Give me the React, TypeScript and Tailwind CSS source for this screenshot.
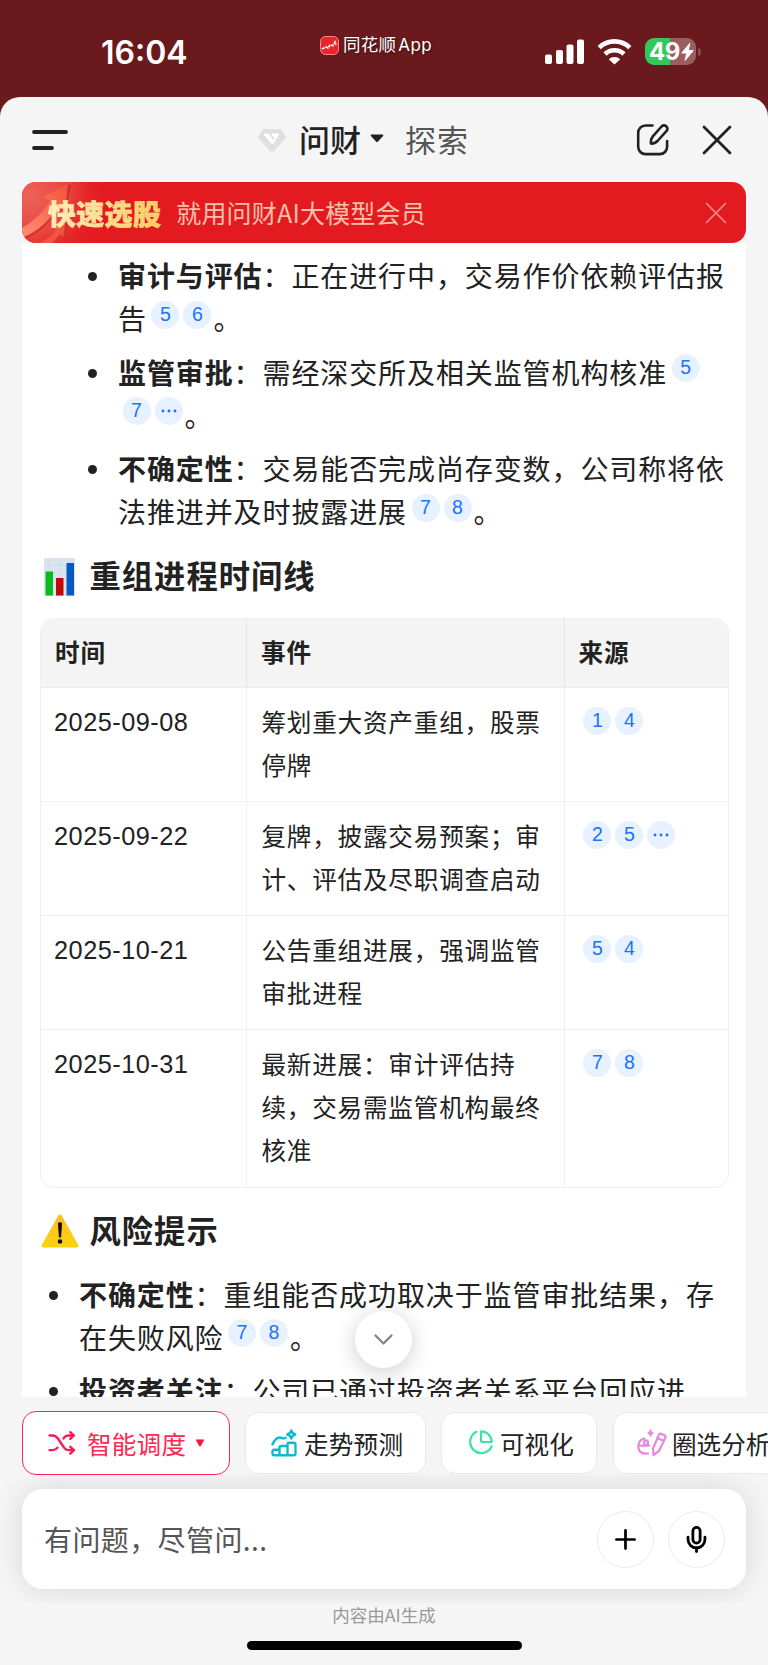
import React from 'react';
import { Mic, Plus } from 'lucide-react';

type Line = { bold?: string; text?: string; refs?: string[]; end?: string };

const progressItems: Line[][] = [
  [
    { bold: '审计与评估', text: '：正在进行中，交易作价依赖评估报' },
    { text: '告', refs: ['5', '6'], end: '。' },
  ],
  [
    { bold: '监管审批', text: '：需经深交所及相关监管机构核准', refs: ['5'] },
    { refs: ['7', '···'], end: '。' },
  ],
  [
    { bold: '不确定性', text: '：交易能否完成尚存变数，公司称将依' },
    { text: '法推进并及时披露进展', refs: ['7', '8'], end: '。' },
  ],
];

const riskItems: Line[][] = [
  [
    { bold: '不确定性', text: '：重组能否成功取决于监管审批结果，存' },
    { text: '在失败风险', refs: ['7', '8'], end: '。' },
  ],
  [{ bold: '投资者关注', text: '：公司已通过投资者关系平台回应进' }],
];

const rows = [
  { date: '2025-09-08', event: ['筹划重大资产重组，股票', '停牌'], refs: ['1', '4'] },
  { date: '2025-09-22', event: ['复牌，披露交易预案；审', '计、评估及尽职调查启动'], refs: ['2', '5', '···'] },
  { date: '2025-10-21', event: ['公告重组进展，强调监管', '审批进程'], refs: ['5', '4'] },
  { date: '2025-10-31', event: ['最新进展：审计评估持', '续，交易需监管机构最终', '核准'], refs: ['7', '8'] },
];

const Refs = ({ items }: { items: string[] }) => (
  <span className="flex gap-1 ml-[4.500px] mr-[2px]">
    {items.map((item) => (
      <span
        key={item}
        className="flex items-center justify-center w-7 h-7 rounded-full bg-[#e7f1ff] text-[#1a72ff] text-[19.500px] leading-none tracking-normal font-['Liberation_Sans',sans-serif]"
      >
        {item === '···' ? (
          <svg width="16" height="4" viewBox="0 0 16 4" fill="currentColor">
            <circle cx="2" cy="2" r="1.4" />
            <circle cx="8" cy="2" r="1.4" />
            <circle cx="14" cy="2" r="1.4" />
          </svg>
        ) : (
          item
        )}
      </span>
    ))}
  </span>
);

const BulletList = ({ items }: { items: Line[][] }) => (
  <ul className="flex flex-col gap-[10.6px] text-[28px] tracking-[0.9px]">
    {items.map((lines, i) => (
      <li key={i} className="flex">
        <span className="w-[9px] h-[9px] mt-[18px] mr-[21px] shrink-0 rounded-full bg-[#222]" />
        <div>
          {lines.map((line, j) => (
            <div key={j} className="flex items-center h-[43px] leading-[43px]">
              {line.bold && <strong className="font-bold">{line.bold}</strong>}
              {line.text && <span>{line.text}</span>}
              {line.refs && (
                <span className="-mt-2">
                  <Refs items={line.refs} />
                </span>
              )}
              {line.end && <span>{line.end}</span>}
            </div>
          ))}
        </div>
      </li>
    ))}
  </ul>
);

const StatusBar = () => (
  <div className="flex h-[97px] shrink-0 text-white">
    <div className="w-[320px] pl-[101px] pt-[33px] font-['Inter',sans-serif] font-semibold text-[32px] leading-[40px]">
      16:04
    </div>
    <div className="flex items-center gap-1 h-5 mt-[35px] w-[182px] text-[17.500px]">
      <svg width="19" height="19" viewBox="0 0 19 19">
        <rect x="0.5" y="0.5" width="18" height="18" rx="5" fill="#e8262b" stroke="#f58a8a" />
        <path d="M2 13l4-2 2 1 2-3 3 .5 2-3.5 1 3" fill="none" stroke="#fff" strokeWidth="1.6" strokeDasharray="3 .8" />
      </svg>
      <span className="whitespace-nowrap tracking-[0.2px] [text-shadow:1px_1px_2px_rgba(0,0,0,0.5)]">
        同花顺 <span className="-ml-0.5 font-['Inter',sans-serif] text-[17px] tracking-[0.5px]">App</span>
      </span>
    </div>
    <div className="flex gap-[13px] pt-[38px] ml-[43px]">
      <svg width="39" height="27" viewBox="0 0 39 27" fill="currentColor">
        <rect x="0" y="16.5" width="7" height="9.5" rx="2" />
        <rect x="11" y="12" width="7" height="14" rx="2" />
        <rect x="21.5" y="6.5" width="7" height="19.5" rx="2" />
        <rect x="32" y="1.5" width="7" height="24.5" rx="2" />
      </svg>
      <svg width="35" height="27" viewBox="0 0 35 27" fill="none" stroke="currentColor" strokeWidth="4.6">
        <path d="M2.2 9.6a22 22 0 0 1 30.6 0" />
        <path d="M8 16a13.8 13.8 0 0 1 19 0" />
        <path d="M11.7 21.2l5.8 5.2 5.8-5.2a8.5 8.5 0 0 0-11.6 0z" fill="currentColor" stroke="none" />
      </svg>
      <div className="flex items-center h-[27px]">
        <div className="relative flex items-center w-[51px] h-[27px] rounded-[9px] bg-gradient-to-r from-[#34c759] from-50% to-[#9a5e60] to-50%">
          <span className="pl-1 font-['Inter',sans-serif] font-bold text-[24px] leading-none tracking-[-0.5px]">49</span>
          <svg className="absolute left-9 top-[5px]" width="13" height="18" viewBox="0 0 13 18" fill="currentColor">
            <path d="M8.6 0L0.6 9.6c-.4.5-.1 1 .5 1h4L3.6 17.5c-.1.6.4.7.7.3L12.4 8c.4-.5.1-1-.5-1h-4L9.3.4C9.4-.2 8.9-.3 8.6 0z" />
          </svg>
        </div>
        <span className="w-[3px] h-2 ml-0.5 rounded-r-full bg-[#8d4a4d]" />
      </div>
    </div>
  </div>
);

const Header = () => (
  <header className="flex items-center h-[85px] shrink-0 text-[#222]">
    <svg className="ml-8" width="36" height="22" viewBox="0 0 36 22" stroke="currentColor" strokeWidth="3.8" strokeLinecap="round">
      <path d="M2 3h32M2 19h18" />
    </svg>
    <svg className="ml-[190px]" width="28" height="24" viewBox="0 0 28 24">
      <path d="M6.500 1h15q1.300 0 2 1l4 6.200q.6 1-.1 2L16 23q-2 1.500-4 0L.6 10.200q-.7-1-.1-2L4.500 2q.7-1 2-1z" fill="#dfdfdf" />
      <path d="M7 5.500h2.500q1 0 1.700 1l4 5.500-2 3.500L6 7q-.6-1.300 1-1.500z" fill="#fff" />
      <path d="M13.800 5.500h6q1.800.2 1 1.800l-5.400 8.200q-1.200 1.200-2.300 0l3.400-5.500-3.200-3q-.8-1.300.5-1.500z" fill="#fff" />
      <path d="M11.500 5l4.500 6" stroke="#dfdfdf" strokeWidth="1.500" />
    </svg>
    <div className="flex items-center ml-[13px] -mt-0.5 text-[31px] leading-[44px]">
      <span className="font-medium">问财</span>
      <svg className="ml-[9px]" width="14" height="9" viewBox="0 0 14 9" fill="currentColor">
        <path d="M1.5 0.5h11q1.5.3.6 1.6L8 7.6q-1 1-2 0L.9 2.1Q0 .8 1.5.5z" />
      </svg>
      <span className="ml-[21px] tracking-[1px] text-[#555]">探索</span>
    </div>
    <svg className="ml-[167px]" width="34" height="34" viewBox="0 0 34 34" fill="none" stroke="currentColor" strokeWidth="2.6" strokeLinecap="round" strokeLinejoin="round">
      <path d="M16.5 2.5H9.5a7.3 7.3 0 0 0-7.3 7.3v14a7.3 7.3 0 0 0 7.3 7.3h14.3a7.3 7.3 0 0 0 7.3-7.3V18" />
      <path d="M25.500 3.500q2.300-2.100 4.800-.2 2.100 2.200.3 4.600L21.500 18q-2.500 2.600-6.500 2.600-.5-4.200 1.800-7.200z" />
    </svg>
    <svg className="ml-[32px]" width="30" height="30" viewBox="0 0 30 30" stroke="currentColor" strokeWidth="2.8" strokeLinecap="round">
      <path d="M2 2l26 26M28 2L2 28" />
    </svg>
  </header>
);

const Banner = () => (
  <div className="relative flex items-center mx-[22px] h-[61px] shrink-0 rounded-[14px] overflow-hidden bg-[#e31b20] z-10">
    <svg className="absolute left-0 top-0" width="90" height="61" viewBox="0 0 90 61">
      <defs>
        <radialGradient id="glow" gradientUnits="userSpaceOnUse" cx="8" cy="14" r="78">
          <stop offset="0" stopColor="#ee6259" />
          <stop offset="0.5" stopColor="#e94540" />
          <stop offset="1" stopColor="#e31b20" stopOpacity="0" />
        </radialGradient>
        <linearGradient id="arrow" x1="0" y1="1" x2="1" y2="0">
          <stop offset="0" stopColor="#ff8f72" />
          <stop offset="1" stopColor="#f4523b" />
        </linearGradient>
      </defs>
      <rect width="90" height="61" fill="url(#glow)" />
      <path d="M0 58Q23 50 36 27l8 2 5-26-3-1-4 26-7-4Q24 46 0 56z" fill="#c8291f" opacity="0.7" />
      <path d="M0 46Q18 36 28 19l-7-4L46 2l-3 26-7-4Q24 46 0 56z" fill="url(#arrow)" />
      <path d="M17 61q12-5 17-13l-3-2 13-9-1 19-5-4-8 9z" fill="#f0553f" />
      <path d="M44 37l2 0-3 21-2-2z" fill="#c8291f" opacity="0.7" />
    </svg>
    <span className="relative ml-[26px] font-black text-[28px] tracking-[0.3px] leading-[40px] bg-gradient-to-r from-[#ffeebd] to-[#ffcb5c] bg-clip-text text-transparent [-webkit-text-stroke:0.4px_#ffe09a]">
      快速选股
    </span>
    <span className="ml-[15px] text-[25px] tracking-[0.2px] text-[#ffc0ab]">就用问财AI大模型会员</span>
    <svg className="ml-auto mr-[19px]" width="22" height="22" viewBox="0 0 22 22" stroke="#f48a8b" strokeWidth="1.7" strokeLinecap="round">
      <path d="M1.500 1.500l19 19M20.500 1.500l-19 19" />
    </svg>
  </div>
);

const ChartEmoji = () => (
  <svg width="31" height="38" viewBox="0 0 31 38">
    <rect width="31" height="38" fill="#d9e5ee" />
    <path d="M0 7.500h31M0 15h31M0 22.500h31M0 30h31M5 0v38M15.500 0v38M26 0v38" stroke="#c9d8e4" strokeWidth="0.6" />
    <rect x="1.500" y="13.500" width="7.500" height="24" fill="#0bbb1b" />
    <rect x="12" y="20" width="7.500" height="17.500" fill="#c10808" />
    <rect x="22.500" y="5" width="7.500" height="32.500" fill="#0a56c4" />
  </svg>
);

const WarningEmoji = () => (
  <svg width="38" height="34" viewBox="0 0 38 34">
    <defs>
      <linearGradient id="warn" x1="0" y1="0" x2="0" y2="1">
        <stop offset="0" stopColor="#fbbf2b" />
        <stop offset="1" stopColor="#ffd20a" />
      </linearGradient>
    </defs>
    <path d="M17.300 1.500q1.700-2 3.400 0L37.300 31q.8 2.400-1.500 2.500H2.200Q-.1 33.400.7 31z" fill="url(#warn)" />
    <path d="M16.900 9q2.100-1.500 4.200 0l-1 14q-1.100 1.200-2.200 0z" fill="#111" />
    <circle cx="19" cy="27.500" r="2.300" fill="#111" />
  </svg>
);

const cell = 'px-[14.4px] border-[#f0f0f0]';

const TimelineTable = () => (
  <div className="ml-[18px] w-[689px] mt-[20px] rounded-[14px] border border-[#efefef] overflow-hidden text-[24.600px] leading-[43px] tracking-[0.8px]">
    <div className="grid grid-cols-[206px_317.500px_1fr] h-[69px] bg-[#f4f4f4] border-b border-[#ebebeb] font-bold">
      {['时间', '事件', '来源'].map((title, i) => (
        <div key={title} className={`px-[14px] pt-[11px] border-[#e5e5e5] ${i < 2 ? 'border-r' : ''}`}>
          {title}
        </div>
      ))}
    </div>
    {rows.map((row, i) => (
      <div key={row.date} className={`grid grid-cols-[206px_317.500px_1fr] border-[#f0f0f0] ${i < 3 ? 'border-b' : ''}`}>
        <div className={`${cell} border-r pt-[13px] pl-[13px] font-['Liberation_Sans',sans-serif] text-[25.300px] tracking-[0.500px]`}>{row.date}</div>
        <div className={`${cell} border-r pt-[11.600px] pb-[15.500px] whitespace-nowrap`}>
          {row.event.map((text) => (
            <div key={text}>{text}</div>
          ))}
        </div>
        <div className={`${cell} pt-[18.500px]`}>
          <Refs items={row.refs} />
        </div>
      </div>
    ))}
  </div>
);

const TrendIcon = () => (
  <svg width="26" height="28" viewBox="0 0 26 28" fill="none" stroke="#10b9d3" strokeWidth="2.4" strokeLinecap="round" strokeLinejoin="round">
    <path d="M1.500 15.500C3.500 11 6.500 8.300 9 8.500s3.500 1.800 5.500.3" />
    <path d="M20.300 1.500q.9 3.200 4 4-3.100.8-4 4-.9-3.200-4-4 3.100-.8 4-4z" />
    <path d="M1.500 22.500q0-1.800 1.800-1.800h5.200v5.500H3.300q-1.800 0-1.800-1.800zM8.500 18.800q0-1.800 1.800-1.800h6.200v9.200h-8zM16.500 15.500q0-1.800 1.800-1.800h4.400q1.800 0 1.800 1.800v8.900q0 1.800-1.800 1.800h-6.200z" />
  </svg>
);

const PieIcon = () => (
  <svg width="25" height="25" viewBox="0 0 25 25" fill="none" stroke="#3fe39d" strokeWidth="2.200" strokeLinecap="round" strokeLinejoin="round">
    <path d="M8.500 1.800A11.200 11.200 0 1 0 23.600 16.500" />
    <path d="M13 1.300v9.200q0 1.500 1.500 1.500h9.200A10.700 10.700 0 0 0 13 1.300z" />
  </svg>
);

const CircleSelectIcon = () => (
  <svg width="30" height="28" viewBox="0 0 30 28" fill="none" stroke="#ea86de" strokeWidth="2.200" strokeLinecap="round" strokeLinejoin="round">
    <path d="M13.500 1q.6 2.700 2.800 3.200-2.200.5-2.800 3.200-.6-2.700-2.800-3.200 2.200-.5 2.800-3.200z" fill="#ea86de" strokeWidth="1" />
    <path d="M7 9.500C2.500 11 1 15 1.500 19s4 6 9.500 5.500M3.500 16.500c3.500 1 7.500 0 7.500-3s-4-2.500-4 0 2.500 4 5 2.800" />
    <path d="M22 5.500q.8-1.300 2.200-.8l3.600 1.700q1.300.8.700 2.200L22 22l-5.500 4-.5-6.500zM20.300 9l6.500 3" />
  </svg>
);

const Chips = () => (
  <div className="flex items-center gap-4 h-[78px] pl-[22px] pt-[13px] shrink-0 overflow-hidden text-[24.600px] leading-[34px] whitespace-nowrap text-[#222]">
    <button className="flex items-center shrink-0 w-[208px] h-16 pl-[25px] rounded-[14px] bg-white border-[1.500px] border-[#ff2850] text-[#ff2850]">
      <svg width="28" height="24" viewBox="0 0 28 24" fill="none" stroke="#ff1750" strokeWidth="2.300" strokeLinecap="round" strokeLinejoin="round">
        <path d="M1.500 4.500h3.200q3 0 4.800 2.500l6.500 9.500q1.700 2.700 4.800 2.700H26M1.500 19.200h3.200q3 0 4.800-2.500M15.500 7.500q1.800-3 5-3H26M22.300 1.200L26 4.500l-3.700 3.400M22.300 15.800L26 19.200l-3.700 3.400" />
      </svg>
      <span className="ml-[11px] tracking-[0.200px]">智能调度</span>
      <svg className="ml-[9px]" width="10" height="8" viewBox="0 0 10 8" fill="#ff1043">
        <path d="M.5.5h9L5.800 7q-.8 1-1.600 0z" />
      </svg>
    </button>
    <button className="flex items-center shrink-0 w-[181px] h-[62px] -ml-[1px] pl-[25px] gap-[7px] rounded-[14px] bg-white border border-[#e9e9e9]">
      <TrendIcon />
      <span className="tracking-[0.200px]">走势预测</span>
    </button>
    <button className="flex items-center shrink-0 w-[156px] h-[62px] -ml-[1px] pl-[26px] gap-[7px] rounded-[14px] bg-white border border-[#e9e9e9]">
      <PieIcon />
      <span>可视化</span>
    </button>
    <button className="flex items-center shrink-0 w-[190px] h-[62px] pl-[23px] gap-[5px] rounded-[14px] bg-white border border-[#e9e9e9]">
      <CircleSelectIcon />
      <span>圈选分析</span>
    </button>
  </div>
);

const Composer = () => (
  <div className="h-[128px] pt-3.5 px-[22px] shrink-0 overflow-hidden">
    <div className="flex items-center h-[100px] pl-[22px] pr-[21px] rounded-[21px] bg-white shadow-[0_0_30px_rgba(0,0,0,0.12)]">
      <span className="text-[28px] tracking-[0.400px] text-[#555]">有问题，尽管问...</span>
      <button className="flex items-center justify-center w-[57px] h-[57px] ml-auto rounded-full border-[1.500px] border-[#ebebeb] text-black">
        <Plus size={31} strokeWidth={2.1} />
      </button>
      <button className="flex items-center justify-center w-[57px] h-[57px] ml-3.5 rounded-full border-[1.500px] border-[#ebebeb] text-black">
        <Mic size={29} strokeWidth={2.300} />
      </button>
    </div>
  </div>
);

const App = () => {
  return (
    <div className="w-[768px] h-[1665px] overflow-hidden bg-[#6a191c] font-['Noto_Sans_CJK_SC',sans-serif] text-[#222] flex flex-col">
      <StatusBar />
      <div className="flex flex-col flex-1 rounded-t-[20px] bg-[#f5f5f5] overflow-hidden">
        <Header />
        <Banner />

        {/* Answer body, scrolled */}
        <main className="relative mx-[22px] h-[1154px] shrink-0 overflow-hidden bg-white whitespace-nowrap">
          <div className="pt-[11px] pl-[66px]">
            <BulletList items={progressItems} />
          </div>
          <h2 className="flex items-center mt-[21px] ml-[21.500px] h-11 text-[31.300px] tracking-[1px] font-bold">
            <span className="mt-[2px]">
              <ChartEmoji />
            </span>
            <span className="ml-[15px] -mt-0.5">重组进程时间线</span>
          </h2>
          <TimelineTable />
          <h2 className="flex items-center mt-[21px] ml-[18.500px] h-11 text-[31.300px] tracking-[1px] font-bold">
            <WarningEmoji />
            <span className="ml-[11px]">风险提示</span>
          </h2>
          <div className="pt-[20px] pl-[27px]">
            <BulletList items={riskItems} />
          </div>
          <button className="absolute left-[333px] top-[1068px] flex items-center justify-center w-[57px] h-[57px] rounded-full bg-white shadow-[0_4px_22px_rgba(0,0,0,0.2)]">
            <svg width="19" height="12" viewBox="0 0 19 12" fill="none" stroke="#80808a" strokeWidth="2.200" strokeLinecap="round" strokeLinejoin="round">
              <path d="M1.500 1.500l8 8 8-8" />
            </svg>
          </button>
        </main>

        <Chips />
        <Composer />
        <footer className="flex flex-col items-center">
          <p className="mt-0.5 text-[17.500px] leading-5 text-[#999]">内容由AI生成</p>
          <div className="mt-[16px] w-[275px] h-[9px] rounded-full bg-black" />
        </footer>
      </div>
    </div>
  );
};

export default App;
